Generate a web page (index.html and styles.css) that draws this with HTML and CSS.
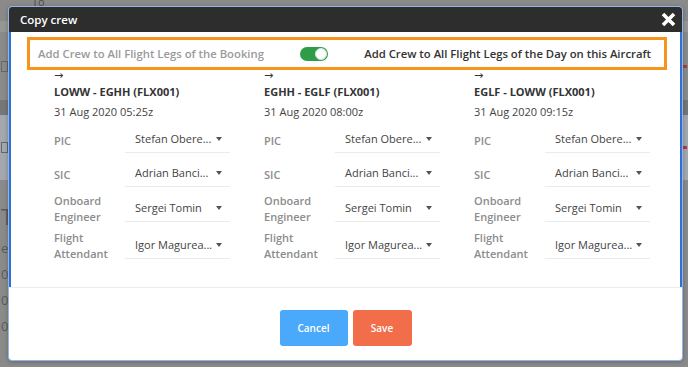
FILE: index.html
```html
<!DOCTYPE html>
<html>
<head>
    <link rel="stylesheet" href="styles.css">
</head>
<body>
    <div class="page">
        <div class="page-row page-top"><span class="page-to">To</span></div>
        <div class="page-row page-band"></div>
        <div class="page-row page-list">
            <span class="mark-box"></span>
            <span class="mark-red"></span>
        </div>
        <div class="page-row page-dark"></div>
        <div class="page-row page-selected">
            <span class="mark-box"></span>
            <span class="mark-red"></span>
        </div>
        <div class="page-row page-rest">
            <span class="page-letter">T</span>
            <span class="page-small">ee</span>
            <span class="page-small">0</span>
            <span class="page-small">0</span>
            <span class="page-small">0</span>
        </div>
    </div>

    <div class="modal">
        <div class="modal-header">
            <span class="modal-title">Copy crew</span>
            <svg class="modal-close" width="15" height="15" viewBox="0 0 15 15">
                <path d="M2 2 L13 13 M13 2 L2 13" stroke="#fff" stroke-width="3.6" fill="none"/>
            </svg>
        </div>

        <div class="modal-body">
            <div class="scope-box">
                <span class="scope-label scope-muted">Add Crew to All Flight Legs of the Booking</span>
                <span class="toggle"><span class="toggle-knob"></span></span>
                <span class="scope-label scope-active">Add Crew to All Flight Legs of the Day on this Aircraft</span>
            </div>

            <div class="legs">
                <div class="leg">
                    <div class="leg-arrow">&rarr;</div>
                    <div class="leg-route">LOWW - EGHH (FLX001)</div>
                    <div class="leg-date">31 Aug 2020 05:25z</div>
                    <div class="crew-row"><span class="crew-label">PIC</span><span class="crew-select">Stefan Obere...<i class="caret"></i></span></div>
                    <div class="crew-row"><span class="crew-label">SIC</span><span class="crew-select">Adrian Banci...<i class="caret"></i></span></div>
                    <div class="crew-row two-line"><span class="crew-label">Onboard<br>Engineer</span><span class="crew-select">Sergei Tomin<i class="caret"></i></span></div>
                    <div class="crew-row two-line"><span class="crew-label">Flight<br>Attendant</span><span class="crew-select">Igor Magurea...<i class="caret"></i></span></div>
                </div>
                <div class="leg">
                    <div class="leg-arrow">&rarr;</div>
                    <div class="leg-route">EGHH - EGLF (FLX001)</div>
                    <div class="leg-date">31 Aug 2020 08:00z</div>
                    <div class="crew-row"><span class="crew-label">PIC</span><span class="crew-select">Stefan Obere...<i class="caret"></i></span></div>
                    <div class="crew-row"><span class="crew-label">SIC</span><span class="crew-select">Adrian Banci...<i class="caret"></i></span></div>
                    <div class="crew-row two-line"><span class="crew-label">Onboard<br>Engineer</span><span class="crew-select">Sergei Tomin<i class="caret"></i></span></div>
                    <div class="crew-row two-line"><span class="crew-label">Flight<br>Attendant</span><span class="crew-select">Igor Magurea...<i class="caret"></i></span></div>
                </div>
                <div class="leg">
                    <div class="leg-arrow">&rarr;</div>
                    <div class="leg-route">EGLF - LOWW (FLX001)</div>
                    <div class="leg-date">31 Aug 2020 09:15z</div>
                    <div class="crew-row"><span class="crew-label">PIC</span><span class="crew-select">Stefan Obere...<i class="caret"></i></span></div>
                    <div class="crew-row"><span class="crew-label">SIC</span><span class="crew-select">Adrian Banci...<i class="caret"></i></span></div>
                    <div class="crew-row two-line"><span class="crew-label">Onboard<br>Engineer</span><span class="crew-select">Sergei Tomin<i class="caret"></i></span></div>
                    <div class="crew-row two-line"><span class="crew-label">Flight<br>Attendant</span><span class="crew-select">Igor Magurea...<i class="caret"></i></span></div>
                </div>
            </div>
        </div>

        <div class="modal-footer">
            <button class="btn btn-cancel">Cancel</button>
            <button class="btn btn-save">Save</button>
        </div>
    </div>
</body>
</html>
```

FILE: styles.css
```css
body {
    margin: 0;
    font-family: "Open Sans", "Liberation Sans", sans-serif;
    background: #8a8a8a;
    overflow: hidden;
}

/* greyed page behind the dialog */
.page {
    display: flex;
    flex-direction: column;
    height: 367px;
}
.page-row {
    display: flex;
    align-items: center;
    justify-content: space-between;
    padding: 0 1px;
}
.page-top {
    height: 21px;
    align-items: flex-start;
}
.page-to {
    margin: -5px 0 0 31px;
    font-size: 11px;
    line-height: 14px;
    color: #4a4a4a;
}
.page-band {
    height: 11px;
    background: #969696;
}
.page-list {
    height: 68px;
}
.page-dark {
    height: 15px;
    background: #767676;
}
.page-selected {
    height: 65px;
    background: #a2a8ad;
}
.page-rest {
    flex: 1;
    flex-direction: column;
    align-items: flex-start;
    justify-content: flex-start;
    padding: 24px 0 0 1px;
    gap: 14px;
    color: #5a5a5a;
}
.page-letter {
    font-size: 22px;
    line-height: 24px;
}
.page-small {
    font-size: 13px;
    line-height: 12px;
}
.mark-box {
    width: 5px;
    height: 9px;
    border: 1px solid #666;
}
.mark-red {
    width: 4px;
    height: 3px;
    background: #b33a3a;
}

/* dialog */
.modal {
    position: absolute;
    left: 8px;
    top: 6px;
    width: 675px;
    height: 355px;
    box-sizing: border-box;
    border: 1px solid #8fb6ec;
    border-radius: 4px;
    background: #fff;
    display: flex;
    flex-direction: column;
    overflow: hidden;
    box-shadow: 0 1px 4px rgba(0, 0, 0, 0.25);
}

.modal-header {
    height: 25px;
    background: #2d2d2d;
    display: flex;
    align-items: center;
    justify-content: space-between;
    padding: 0 6px 0 11px;
}
.modal-title {
    color: #fff;
    font-size: 11.5px;
    font-weight: 600;
}
.modal-close {
    display: block;
}

.modal-body {
    border-left: 2px solid #2f6fd8;
    border-right: 2px solid #2f6fd8;
    padding: 5px 13px 26px 16px;
}

.scope-box {
    display: flex;
    align-items: center;
    height: 33px;
    box-sizing: border-box;
    border: 3px solid #f7941d;
    padding: 0 13px 0 8px;
}
.scope-label {
    font-size: 11.3px;
    font-weight: 600;
}
.scope-muted {
    flex: 1;
    color: #9a9a9a;
}
.scope-active {
    margin-left: 36px;
    color: #333;
}
.toggle {
    display: flex;
    justify-content: flex-end;
    align-items: center;
    width: 28px;
    height: 14px;
    box-sizing: border-box;
    padding: 1px;
    border-radius: 7px;
    background: #2f9d48;
}
.toggle-knob {
    width: 12px;
    height: 12px;
    box-sizing: border-box;
    border-radius: 50%;
    background: #fff;
    border: 1px solid #d8e8dc;
}

.legs {
    display: grid;
    grid-template-columns: 176px 176px 176px;
    column-gap: 34px;
    padding-left: 27px;
}
.leg-arrow {
    font-family: "DejaVu Sans", sans-serif;
    font-size: 11px;
    line-height: 12px;
    color: #333;
}
.leg-route {
    margin-top: 2px;
    font-size: 11px;
    line-height: 16px;
    font-weight: 700;
    color: #333;
}
.leg-date {
    margin-top: 4px;
    font-size: 11px;
    line-height: 16px;
    color: #444;
}

.crew-row {
    display: grid;
    grid-template-columns: 71px 105px;
    align-items: center;
    margin-top: 6px;
}
.leg-date + .crew-row {
    margin-top: 5px;
}
.crew-row.two-line {
    margin-top: 5px;
}
.crew-label {
    margin: 2px 0 -2px;
    font-size: 11px;
    line-height: 16px;
    font-weight: 600;
    color: #8c8c8c;
}
.two-line .crew-label {
    margin: 1px 0 -1px;
}
.crew-select {
    display: flex;
    align-items: center;
    justify-content: space-between;
    height: 28px;
    box-sizing: border-box;
    border-bottom: 1px solid #ebebeb;
    padding: 0 8px 0 10px;
    font-size: 11px;
    color: #444;
}
.caret {
    width: 0;
    height: 0;
    border-left: 3.5px solid transparent;
    border-right: 3.5px solid transparent;
    border-top: 4px solid #555;
}

.modal-footer {
    flex: 1;
    border-top: 1px solid #ececec;
    display: flex;
    justify-content: center;
    align-items: flex-start;
    gap: 5px;
    padding-top: 22px;
}
.btn {
    height: 36px;
    border: none;
    border-radius: 3px;
    color: #fff;
    font-family: "Open Sans", "Liberation Sans", sans-serif;
    font-size: 10px;
    font-weight: 600;
}
.btn-cancel {
    width: 68px;
    background: #4aa9fb;
}
.btn-save {
    width: 59px;
    background: #f26e4b;
}
```
